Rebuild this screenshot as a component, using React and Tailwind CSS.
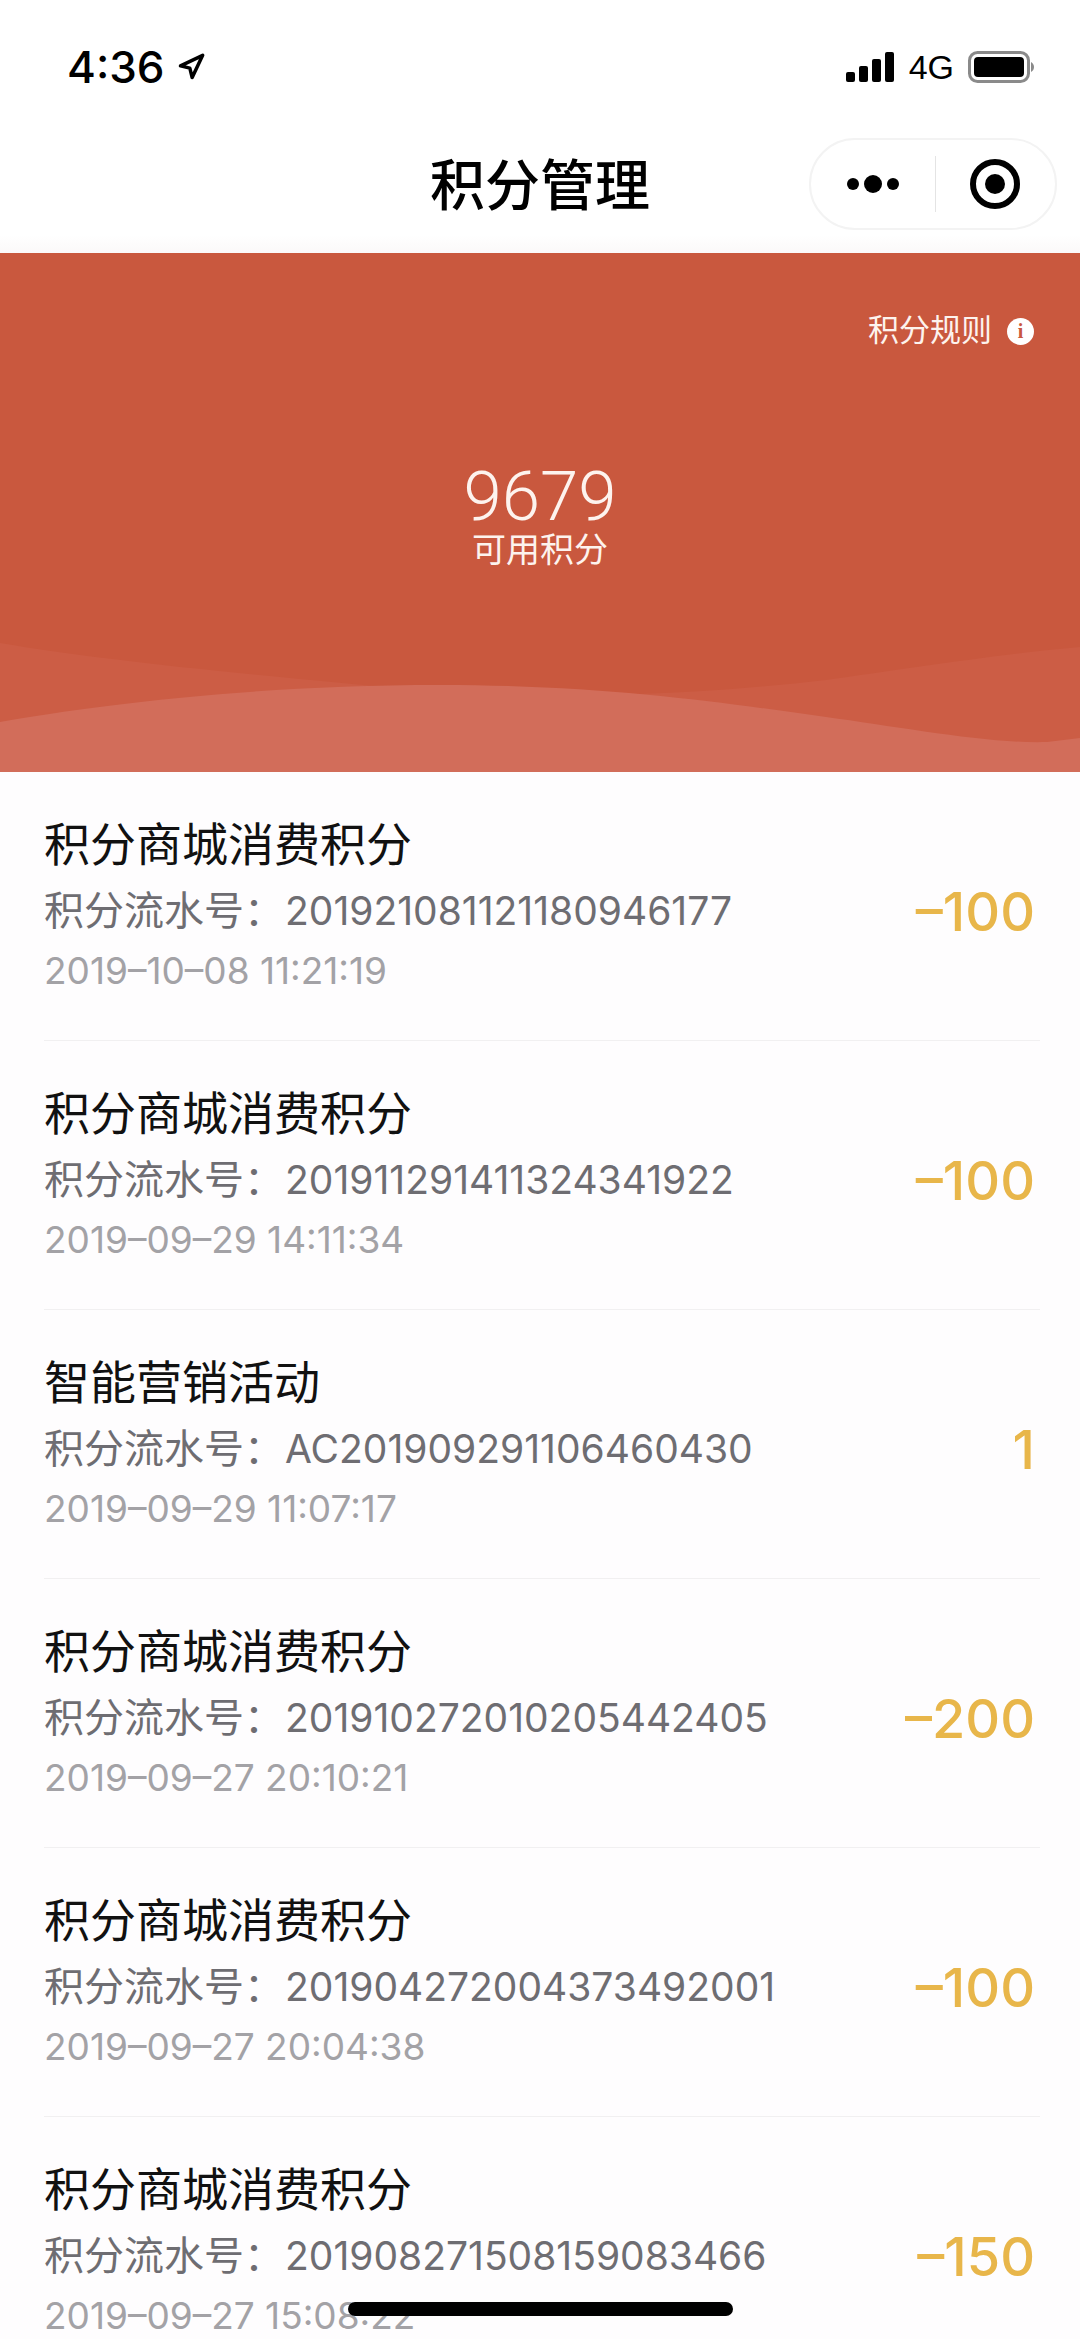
import React from 'react';
import { Navigation } from 'lucide-react';

const records = [
    { title: '积分商城消费积分', serial: '201921081121180946177', date: '2019–10–08 11:21:19', amount: '–100' },
    { title: '积分商城消费积分', serial: '201911291411324341922', date: '2019–09–29 14:11:34', amount: '–100' },
    { title: '智能营销活动', serial: 'AC201909291106460430', date: '2019–09–29 11:07:17', amount: '1' },
    { title: '积分商城消费积分', serial: '201910272010205442405', date: '2019–09–27 20:10:21', amount: '–200' },
    { title: '积分商城消费积分', serial: '201904272004373492001', date: '2019–09–27 20:04:38', amount: '–100' },
    { title: '积分商城消费积分', serial: '201908271508159083466', date: '2019–09–27 15:08:22', amount: '–150' },
];

const StatusBar = () => (
    <div className="h-[134px] bg-white pl-[67px] pr-[46px] pt-[44px] flex items-start justify-between text-black">
        <div className="flex items-center h-[46px]">
            <span className="text-[44px] leading-[46px] font-medium font-['Inter',sans-serif]">4:36</span>
            <Navigation className="ml-[12px] w-[28px] h-[28px]" strokeWidth={3} />
        </div>
        <div className="flex items-center h-[46px]">
            <svg width="50" height="30" viewBox="0 0 50 30" fill="black">
                <rect x="0" y="20" width="9" height="10" rx="2" />
                <rect x="13" y="14" width="9" height="16" rx="2" />
                <rect x="26" y="7" width="9" height="23" rx="2" />
                <rect x="39" y="0" width="9" height="30" rx="2" />
            </svg>
            <span className="ml-[13px] text-[34px] leading-[46px]">4G</span>
            <svg className="ml-[14px]" width="66" height="32" viewBox="0 0 66 32">
                <rect x="1.5" y="1.5" width="59" height="29" rx="8" fill="none" stroke="#8a8a8a" strokeWidth="3" />
                <rect x="6" y="6" width="50" height="20" rx="4" fill="black" />
                <path d="M63 11c2 1 3 3 3 5s-1 4-3 5z" fill="#8a8a8a" />
            </svg>
        </div>
    </div>
);

const NavBar = () => (
    <div className="h-[119px] relative flex justify-center bg-gradient-to-b from-white from-85% to-[#fbf9f9]">
        <h1 className="mt-[20px] text-[55px] leading-[64px] font-medium text-black">积分管理</h1>
        <div className="absolute left-[809px] top-[4px] w-[248px] h-[92px] rounded-full border-2 border-[#f3f3f3] bg-white flex items-center">
            <div className="w-[124px] flex items-center justify-center gap-[5px]">
                <span className="w-[12px] h-[12px] rounded-full bg-black"></span>
                <span className="w-[18px] h-[18px] rounded-full bg-black"></span>
                <span className="w-[12px] h-[12px] rounded-full bg-black"></span>
            </div>
            <div className="w-[1px] h-[56px] bg-[#e4e4e4]"></div>
            <div className="flex-1 flex items-center justify-center pr-[2px]">
                <svg width="50" height="50" viewBox="0 0 50 50">
                    <circle cx="25" cy="25" r="22" fill="none" stroke="black" strokeWidth="6" />
                    <circle cx="25" cy="25" r="10" fill="black" />
                </svg>
            </div>
        </div>
    </div>
);

const Banner = () => (
    <div className="h-[519px] relative overflow-hidden bg-[#c9583e] text-[#fdf3ee]">
        <div className="flex justify-end items-center pt-[60px] pr-[46px]">
            <span className="text-[31px] leading-[36px]">积分规则</span>
            <span className="ml-[15px] w-[27px] h-[27px] rounded-full bg-white text-[#c9583e] text-[20px] leading-[27px] font-bold text-center font-['Liberation_Serif',serif]">i</span>
        </div>
        <div className="mt-[113px] flex flex-col items-center relative">
            <div className="text-[69px] leading-[70px] font-light font-['Roboto',sans-serif]">9679</div>
            <div className="text-[34px] leading-[36px]">可用积分</div>
        </div>
        <svg className="absolute left-0 bottom-0" width="1080" height="140" viewBox="0 0 1080 140" preserveAspectRatio="none">
            <path d="M0 11C100 28 240 42 440 60 600 68 720 60 826 48 900 38 1000 22 1080 15V140H0Z" fill="#cc5d45" />
            <path d="M0 90C90 74 250 53 440 53 600 53 720 70 826 85 900 95 990 112 1047 110L1080 106V140H0Z" fill="#d26d5a" />
        </svg>
    </div>
);

const RecordRow = ({ record, last }) => (
    <div className={`h-[269px] ml-[44px] mr-[40px] pr-[5px] flex items-center justify-between ${last ? '' : 'border-b border-[#f1f0f1]'}`}>
        <div className="self-start pt-[43px]">
            <div className="text-[46px] leading-[60px] text-[#111111]">{record.title}</div>
            <div className="mt-[6px] leading-[60px] text-[#6e6d72] flex items-center">
                <span className="w-[241px] text-[40px]">积分流水号：</span>
                <span className="text-[39px] font-['Inter',sans-serif]">{record.serial}</span>
            </div>
            <div className="text-[37px] leading-[60px] text-[#a3a2a6] font-['Inter',sans-serif]">{record.date}</div>
        </div>
        <div className="pt-[11px] text-[54px] leading-[60px] font-medium text-[#e8b64a] font-['Inter',sans-serif]">{record.amount}</div>
    </div>
);

const App = () => {
    return (
        <div className="w-[1080px] h-[2339px] relative overflow-hidden bg-[#fefdfe] font-['Liberation_Sans','Noto_Sans_CJK_SC',sans-serif]">
            <StatusBar />
            <NavBar />
            <Banner />
            <div>
                {records.map((record, i) => (
                    <RecordRow key={record.serial} record={record} last={i === records.length - 1} />
                ))}
            </div>
            <div className="absolute left-[348px] top-[2302px] w-[385px] h-[14px] rounded-full bg-black"></div>
        </div>
    );
};

export default App;
